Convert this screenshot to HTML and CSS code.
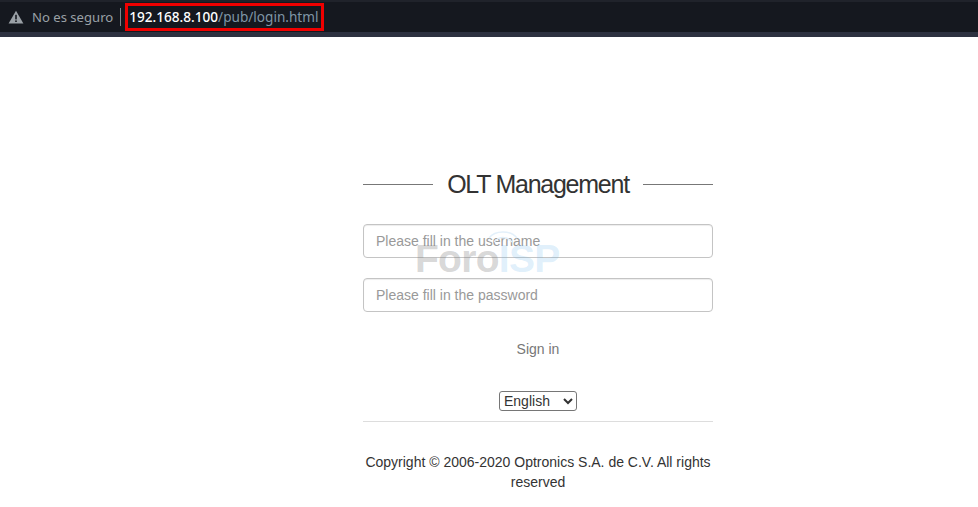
FILE: index.html
```html
<!DOCTYPE html>
<html lang="en">
<head>
<meta charset="utf-8">
<title>OLT Management</title>
<link rel="stylesheet" href="styles.css">
</head>
<body>
<header class="addressbar">
  <svg class="warn" width="16" height="14" viewBox="0 0 16 14"><path d="M8 .8 15.4 13.6H.6Z" fill="#9aa0a6"/><rect x="7.2" y="4.8" width="1.6" height="4.6" fill="#15181f"/><rect x="7.2" y="10.4" width="1.6" height="1.6" fill="#15181f"/></svg>
  <span class="insecure">No es seguro</span>
  <span class="sep"></span>
  <span class="url"><b>192.168.8.100</b>/pub/login.html</span>
</header>
<main class="login">
  <h1 class="title"><span>OLT Management</span></h1>
  <form class="fields">
    <input class="field" type="text" placeholder="Please fill in the username">
    <input class="field" type="password" placeholder="Please fill in the password">
    <div class="watermark" aria-hidden="true">
      <svg class="arcs" width="30" height="14" viewBox="0 0 30 14"><path d="M1 9C7 1 23 1 29 9M6 13C11 7 19 7 24 13" fill="none" stroke="#e3f0fa" stroke-width="1.4"/></svg>
      <span class="wm-foro">Foro</span><span class="wm-isp">ISP</span>
    </div>
  </form>
  <button class="signin" type="button">Sign in</button>
  <div class="lang">
    <select class="langsel"><option>English</option></select>
  </div>
  <hr class="rule">
  <p class="copy">Copyright © 2006-2020 Optronics S.A. de C.V. All rights reserved</p>
</main>
</body>
</html>
```

FILE: styles.css
```css
* { box-sizing: border-box; }
html, body { margin: 0; padding: 0; }
body {
  background: #fff;
  font-family: "Liberation Sans", Arial, sans-serif;
  color: #333;
  font-size: 14px;
  height: 507px;
  overflow: hidden;
}
.addressbar {
  height: 37px;
  background: #15181f;
  border-top: 2px solid #20232b;
  border-bottom: 5px solid #2d3140;
  display: flex;
  align-items: center;
  padding-left: 8px;
  font-family: "Noto Sans", sans-serif;
  font-size: 14px;
}
.warn { flex: none; }
.insecure { margin-left: 8px; color: #9aa0a6; font-size: 13.1px; }
.sep { width: 1px; height: 18px; background: #80868b; margin-left: 7px; }
.url {
  margin-left: 4px;
  width: 199px;
  height: 28px;
  border: 3px solid #f00000;
  color: #7f95a6;
  font-size: 13.6px;
  line-height: 22px;
  padding-left: 1px;
  white-space: nowrap;
  margin-top: -1px;
}
.url b { color: #fff; font-weight: 500; }
.login {
  width: 350px;
  margin-left: 363px;
  padding-top: 132px;
  text-align: center;
}
.title {
  display: flex;
  align-items: center;
  gap: 13px;
  margin: 0 0 25px;
  font-weight: 400;
  font-size: 25px;
  line-height: 30px;
  letter-spacing: -1.25px;
  color: #333;
}
.title::before, .title::after {
  content: "";
  flex: 1;
  height: 1px;
  background: #777;
}
.title span { padding: 0 1px; }
.fields {
  position: relative;
  display: flex;
  flex-direction: column;
  gap: 20px;
}
.field {
  width: 350px;
  height: 34px;
  border: 1px solid #c4c4c4;
  border-radius: 4px;
  padding: 6px 12px;
  font: 14px/20px "Liberation Sans", Arial, sans-serif;
  color: #555;
  background: transparent;
  box-shadow: inset 0 1px 1px rgba(0,0,0,.075);
}
.field::placeholder { color: #999; opacity: 1; }
.watermark {
  position: absolute;
  left: 52px;
  top: 12px;
  font-weight: 700;
  font-size: 39px;
  line-height: 46px;
  pointer-events: none;
  white-space: nowrap;
  letter-spacing: -.7px;
}
.wm-foro { color: rgba(120,120,120,.3); }
.wm-isp { color: rgba(100,180,235,.2); }
.arcs { position: absolute; left: 73px; top: -7px; }
.signin {
  display: block;
  width: 100%;
  height: 34px;
  margin-top: 20px;
  background: none;
  border: 0;
  padding: 0;
  color: #777;
  font: 14px/20px "Liberation Sans", Arial, sans-serif;
}
.lang { margin-top: 25px; height: 24px; }
.langsel {
  width: 78px;
  height: 20px;
  font: 14px "Liberation Sans", Arial, sans-serif;
  color: #333;
  background: #fff;
  border: 1px solid #767676;
  border-radius: 3px;
  vertical-align: top;
}
.rule { border: 0; border-top: 1px solid #ddd; margin: 6px 0 0; }
.copy {
  margin: 30px 0 0;
  line-height: 20px;
}
```
